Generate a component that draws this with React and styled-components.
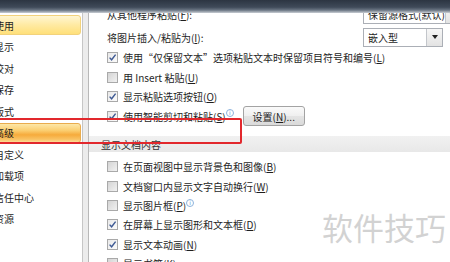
import React from "react";
import styled, { createGlobalStyle } from "styled-components";

const Global = createGlobalStyle`
  html, body { margin: 0; padding: 0; }
  body {
    width: 450px; height: 262px; overflow: hidden;
    font-family: "Noto Sans CJK SC", "Noto Sans", sans-serif;
    background: #ececec;
  }
`;

const Window = styled.div`
  position: relative;
  width: 450px;
  height: 262px;
  overflow: hidden;
  display: flex;
  flex-direction: column;
  color: #1e1e1e;
  font-size: 10px;
`;

const TitleBar = styled.div`
  flex: 0 0 13px;
  background: linear-gradient(#2c3542 0%, #3f4a59 55%, #6b7684 78%, #c9ced4 100%);
`;

const Main = styled.div`
  flex: 1;
  display: flex;
  gap: 5px;
  min-height: 0;
`;

const Nav = styled.div`
  flex: 0 0 82px;
  background: #fff;
  border-right: 1px solid #c6c6c6;
  overflow: hidden;
`;

const NavList = styled.div`
  margin-left: -12px;
  width: 93px;
  padding-top: 2px;
  display: flex;
  flex-direction: column;
  gap: 1.5px;
`;

const NavItem = styled.div`
  box-sizing: border-box;
  height: 20px;
  display: flex;
  align-items: center;
  padding-left: 5px;
  white-space: nowrap;
  border-radius: 0 3px 3px 0;
  border: 1px solid transparent;
  ${(p) =>
    p.$state === "hover" &&
    `background: linear-gradient(#fff6d2 0%, #ffeaa2 50%, #ffe07a 100%);
     border-color: #f2d27c;`}
  ${(p) =>
    p.$state === "active" &&
    `background: linear-gradient(#fde7a8 0%, #fbcf72 35%, #f6ab3c 60%, #f9c263 85%, #fcdc98 100%);
     border-color: #e9ac4e;`}
`;

const Content = styled.div`
  flex: 1;
  background: #fff;
  border-left: 1px solid #b8b8b8;
  overflow: hidden;
  min-width: 0;
`;

const Scroller = styled.div`
  margin-top: -11px;
  width: 380px;
  display: flex;
  flex-direction: column;
`;

const FieldRow = styled.div`
  height: ${(p) => p.$h}px;
  display: flex;
  align-items: center;
  padding-left: 18px;
  white-space: nowrap;
`;

const FieldLabel = styled.span`
  flex: 0 0 256px;
`;

const Combo = styled.div`
  box-sizing: border-box;
  width: ${(p) => p.$w}px;
  height: 19px;
  border: 1px solid #abafb6;
  background: #fff;
  display: flex;
  align-items: center;
  flex: 0 0 auto;
`;

const ComboText = styled.span`
  flex: 1;
  padding-left: 4px;
`;

const ComboButton = styled.span`
  box-sizing: border-box;
  width: 16px;
  height: 17px;
  border-left: 1px solid #c3c6cb;
  background: linear-gradient(#f7f7f7, #e3e3e3);
  display: flex;
  align-items: center;
  justify-content: center;
  &::after {
    content: "";
    border-left: 3px solid transparent;
    border-right: 3px solid transparent;
    border-top: 4px solid #222;
  }
`;

const CheckRow = styled.div`
  height: ${(p) => p.$h}px;
  display: flex;
  align-items: center;
  padding-left: 18px;
  white-space: nowrap;
`;

const Box = styled.span`
  box-sizing: border-box;
  flex: 0 0 11px;
  width: 11px;
  height: 11px;
  margin-right: 5px;
  border: 1px solid #a9a9a9;
  background: ${(p) =>
    p.$checked
      ? "linear-gradient(135deg, #e9e9e9, #fbfbfb)"
      : "linear-gradient(135deg, #d4d4d4, #f1f1f1)"};
  display: flex;
  align-items: center;
  justify-content: center;
`;

const Info = styled.span`
  box-sizing: border-box;
  width: 8px;
  height: 8px;
  border-radius: 50%;
  border: 1px solid #8db3dd;
  color: #6f9bd0;
  font-size: 6px;
  line-height: 6px;
  text-align: center;
  font-family: "DejaVu Sans", sans-serif;
  position: relative;
  top: -3px;
`;

const Button = styled.button`
  box-sizing: border-box;
  margin-left: 9px;
  width: 62px;
  height: 20px;
  border: 1px solid #a3a3a3;
  border-radius: 3px;
  background: linear-gradient(#fafafa 0%, #efefef 50%, #e4e4e4 51%, #dadada 100%);
  font: inherit;
  color: #1e1e1e;
  padding: 0;
`;

const Section = styled.div`
  margin-top: 10px;
  height: 16px;
  background: linear-gradient(#f1f1f1, #e8e8e8);
  display: flex;
  align-items: center;
  padding-left: 12px;
  color: #333;
  margin-bottom: 5.3px;
`;

const Annotation = styled.div`
  position: absolute;
  left: -6px;
  top: 118px;
  width: 248px;
  height: 26px;
  box-sizing: border-box;
  border: 2.5px solid #e2282d;
  border-radius: 2px;
  pointer-events: none;
`;

const Watermark = styled.div`
  position: absolute;
  left: 322px;
  top: 211px;
  font-size: 31px;
  line-height: 31px;
  color: rgba(196, 196, 196, 0.75);
  white-space: nowrap;
  pointer-events: none;
`;

const Check = () => (
  <svg width="9" height="9" viewBox="0 0 9 9">
    <path d="M1.6 4.6 L3.6 6.8 L7.6 1.6" fill="none" stroke="#3f5a94" strokeWidth="1.4" />
  </svg>
);

const Key = ({ k }) => (
  <>
    (<u>{k}</u>)
  </>
);

const CheckItem = ({ checked, children, h = 19.5, extra }) => (
  <CheckRow $h={h}>
    <Box $checked={checked}>{checked && <Check />}</Box>
    <span>{children}</span>
    {extra}
  </CheckRow>
);

const navItems = [
  ["使用", "hover"],
  ["显示"],
  ["校对"],
  ["保存"],
  ["版式"],
  ["高级", "active"],
  ["自定义"],
  ["加载项"],
  ["信任中心"],
  ["资源"],
];

export default function App() {
  return (
    <Window lang="zh-CN">
      <Global />
      <TitleBar />
      <Main>
        <Nav>
          <NavList>
            {navItems.map(([t, s]) => (
              <NavItem key={t} $state={s}>
                {t}
              </NavItem>
            ))}
          </NavList>
        </Nav>
        <Content>
          <Scroller>
            <FieldRow $h={24}>
              <FieldLabel>
                从其他程序粘贴<Key k="F" />:
              </FieldLabel>
              <Combo $w={97}>
                <ComboText>保留源格式(默认)</ComboText>
                <ComboButton />
              </Combo>
            </FieldRow>
            <FieldRow $h={22}>
              <FieldLabel>
                将图片插入/粘贴为<Key k="I" />:
              </FieldLabel>
              <Combo $w={80}>
                <ComboText>嵌入型</ComboText>
                <ComboButton />
              </Combo>
            </FieldRow>
            <CheckItem checked>
              使用“仅保留文本”选项粘贴文本时保留项目符号和编号<Key k="L" />
            </CheckItem>
            <CheckItem>
              用 Insert 粘贴<Key k="U" />
            </CheckItem>
            <CheckItem checked>
              显示粘贴选项按钮<Key k="O" />
            </CheckItem>
            <CheckItem
              checked
              extra={
                <>
                  <Info>i</Info>
                  <Button>
                    设置<Key k="N" />...
                  </Button>
                </>
              }
            >
              使用智能剪切和粘贴<Key k="S" />
            </CheckItem>
            <Section>显示文档内容</Section>
            <CheckItem h={19.3}>
              在页面视图中显示背景色和图像<Key k="B" />
            </CheckItem>
            <CheckItem h={19.3}>
              文档窗口内显示文字自动换行<Key k="W" />
            </CheckItem>
            <CheckItem h={19.3} extra={<Info>i</Info>}>
              显示图片框<Key k="P" />
            </CheckItem>
            <CheckItem h={19.3} checked>
              在屏幕上显示图形和文本框<Key k="D" />
            </CheckItem>
            <CheckItem h={19.3} checked>
              显示文本动画<Key k="N" />
            </CheckItem>
            <CheckItem h={19.3}>
              显示书签<Key k="K" />
            </CheckItem>
          </Scroller>
        </Content>
      </Main>
      <Annotation />
      <Watermark>软件技巧</Watermark>
    </Window>
  );
}
